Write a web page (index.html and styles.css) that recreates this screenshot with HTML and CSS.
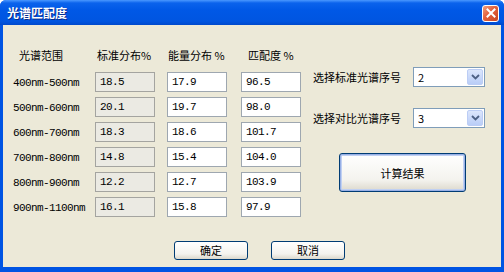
FILE: index.html
```html
<!DOCTYPE html>
<html lang="zh-CN">
<head>
    <meta charset="UTF-8">
    <title>光谱匹配度</title>
    <link rel="stylesheet" href="styles.css">
</head>
<body>

<div class="window">
    <!-- Title bar -->
    <div class="titlebar">
        <span class="title">光谱匹配度</span>
        <span class="close">
            <svg width="10" height="10" viewBox="0 0 10 10">
                <path d="M1.5 1.5 L8.5 8.5 M8.5 1.5 L1.5 8.5" stroke="#fff" stroke-width="2" stroke-linecap="square"/>
            </svg>
        </span>
    </div>

    <div class="content">
        <div class="top">
            <!-- Table of spectrum ranges -->
            <div class="grid">
                <div class="head h1">光谱范围</div>
                <div class="head h2">标准分布%</div>
                <div class="head h3">能量分布 %</div>
                <div class="head h4">匹配度 %</div>

                <div class="label">400nm-500nm</div>
                <div class="box ro">18.5</div>
                <div class="box">17.9</div>
                <div class="box">96.5</div>

                <div class="label">500nm-600nm</div>
                <div class="box ro">20.1</div>
                <div class="box">19.7</div>
                <div class="box">98.0</div>

                <div class="label">600nm-700nm</div>
                <div class="box ro">18.3</div>
                <div class="box">18.6</div>
                <div class="box">101.7</div>

                <div class="label">700nm-800nm</div>
                <div class="box ro">14.8</div>
                <div class="box">15.4</div>
                <div class="box">104.0</div>

                <div class="label">800nm-900nm</div>
                <div class="box ro">12.2</div>
                <div class="box">12.7</div>
                <div class="box">103.9</div>

                <div class="label">900nm-1100nm</div>
                <div class="box ro">16.1</div>
                <div class="box">15.8</div>
                <div class="box">97.9</div>
            </div>

            <!-- Selection panel -->
            <div class="side">
                <div class="pick">
                    <span class="pick-label">选择标准光谱序号</span>
                    <div class="combo">
                        <span class="combo-value">2</span>
                        <span class="combo-btn">
                            <svg width="9" height="6" viewBox="0 0 9 6"><path d="M1 1 L4.5 4.5 L8 1" fill="none" stroke="#4d6185" stroke-width="1.8"/></svg>
                        </span>
                    </div>
                </div>
                <div class="pick">
                    <span class="pick-label">选择对比光谱序号</span>
                    <div class="combo">
                        <span class="combo-value">3</span>
                        <span class="combo-btn">
                            <svg width="9" height="6" viewBox="0 0 9 6"><path d="M1 1 L4.5 4.5 L8 1" fill="none" stroke="#4d6185" stroke-width="1.8"/></svg>
                        </span>
                    </div>
                </div>
                <button class="btn calc">计算结果</button>
            </div>
        </div>

        <div class="footer">
            <button class="btn small">确定</button>
            <button class="btn small">取消</button>
        </div>
    </div>
</div>

</body>
</html>
```

FILE: styles.css
```css
body {
    margin: 0;
    font-family: "Noto Sans CJK SC", "Liberation Sans", sans-serif;
    font-size: 11px;
    color: #000;
}
.window {
    width: 504px;
    height: 272px;
    box-sizing: border-box;
    display: flex;
    flex-direction: column;
    background: #0054e3;
    border-radius: 6px 6px 0 0;
    overflow: hidden;
}
.titlebar {
    height: 25px;
    flex: none;
    display: flex;
    align-items: center;
    justify-content: space-between;
    padding: 0 5px 0 7px;
    background: linear-gradient(to bottom, #4a98ff 0, #0b63ec 3px, #0058e6 40%, #0055e0 85%, #0049cc 100%);
}
.title {
    color: #fff;
    font-weight: bold;
    font-size: 12px;
    text-shadow: 1px 1px 0 #0a2a8a;
}
.close {
    width: 15px;
    height: 15px;
    margin-top: 1px;
    display: flex;
    align-items: center;
    justify-content: center;
    border: 1px solid #fff;
    border-radius: 3px;
    background: linear-gradient(135deg, #f0a080 0, #e2603c 45%, #c84520 100%);
}
.content {
    flex: 1;
    margin: 0 3px 5px 3px;
    background: #ece9d8;
    padding-top: 20px;
    display: flex;
    flex-direction: column;
}
.top {
    display: flex;
    padding-left: 10px;
}
.grid {
    display: grid;
    grid-template-columns: 82px 72px 74px 61px;
    grid-template-rows: 22px repeat(6, 20px);
    row-gap: 5px;
}
.head {
    line-height: 20px;
}
.h1 { padding-left: 6px; }
.h2 { padding-left: 2px; }
.h3 { padding-left: 1px; }
.h4 { padding-left: 7px; }
.label {
    display: flex;
    align-items: center;
    padding-top: 2px;
    font-family: "Liberation Mono", monospace;
    font-size: 11px;
    letter-spacing: -0.6px;
}
.box {
    width: 60px;
    height: 20px;
    box-sizing: border-box;
    border: 1px solid #9ea7b0;
    background: #fff;
    padding-left: 4px;
    display: flex;
    align-items: center;
    font-family: "Liberation Mono", monospace;
    font-size: 11px;
    letter-spacing: -0.6px;
}
.box.ro {
    border-color: #a4a4a0;
    background: #ebeae3;
}
.side {
    margin-left: 11px;
    margin-top: 22px;
    display: flex;
    flex-direction: column;
}
.pick {
    display: flex;
    align-items: center;
    height: 20px;
    margin-bottom: 21px;
}
.pick-label {
    width: 100px;
}
.combo {
    width: 72px;
    height: 20px;
    box-sizing: border-box;
    border: 1px solid #7f9db9;
    background: #fff;
    display: flex;
    align-items: center;
    justify-content: space-between;
    padding: 1px;
}
.combo-value {
    padding-left: 3px;
}
.combo-btn {
    width: 16px;
    height: 16px;
    box-sizing: border-box;
    border: 1px solid #bccdf5;
    border-radius: 2px;
    background: linear-gradient(to bottom, #dce6fc, #b9cdf7);
    display: flex;
    align-items: center;
    justify-content: center;
}
.pick + .pick {
    margin-bottom: 25px;
}
.btn {
    font-family: "Noto Sans CJK SC", sans-serif;
    font-size: 11px;
    color: #000;
    border: 1px solid #003c74;
    border-radius: 3px;
    background: linear-gradient(to bottom, #ffffff 0, #f4f3ee 70%, #dcd8cc 100%);
    padding: 0;
}
.calc {
    width: 127px;
    height: 39px;
    margin-left: 26px;
    box-shadow: inset 0 0 0 1px #98b0e6, inset 0 0 0 2px #c0d0f2;
}
.footer {
    display: flex;
    gap: 23px;
    padding-left: 171px;
    margin-top: 24px;
}
.small {
    width: 74px;
    height: 19px;
    line-height: 17px;
}
```
